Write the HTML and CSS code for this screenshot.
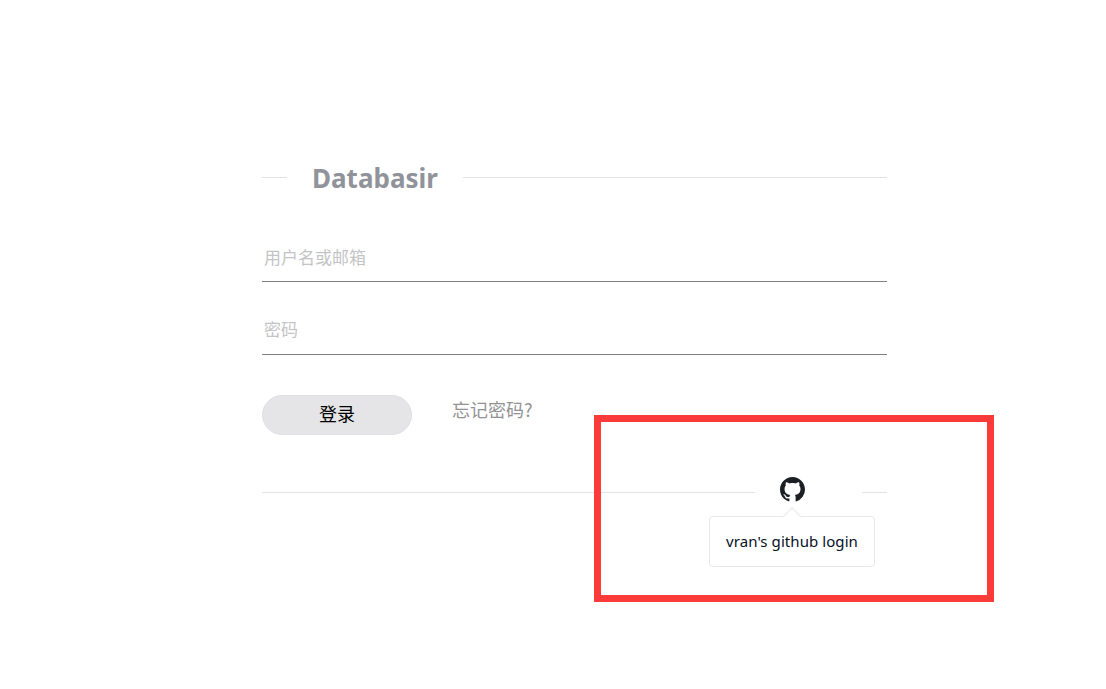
FILE: index.html
```html
<!DOCTYPE html>
<html lang="zh">
<head>
<meta charset="utf-8">
<title>Databasir</title>
<link rel="stylesheet" href="styles.css">
</head>
<body>
<main class="login">
  <div class="divider title-row">
    <span class="line line-start"></span>
    <h1 class="title">Databasir</h1>
    <span class="line"></span>
  </div>
  <form class="form">
    <input class="field" type="text" placeholder="用户名或邮箱">
    <input class="field field-second" type="password" placeholder="密码">
    <div class="actions">
      <button class="submit" type="button">登录</button>
      <a class="forgot" href="#">忘记密码?</a>
    </div>
  </form>
  <div class="divider oauth-row">
    <span class="line"></span>
    <span class="oauth">
      <svg class="github" viewBox="0 0 16 16" width="25" height="25" aria-hidden="true"><path fill="#1b1f23" d="M8 0C3.58 0 0 3.58 0 8c0 3.54 2.29 6.53 5.47 7.59.4.07.55-.17.55-.38 0-.19-.01-.82-.01-1.49-2.01.37-2.53-.49-2.69-.94-.09-.23-.48-.94-.82-1.13-.28-.15-.68-.52-.01-.53.63-.01 1.08.58 1.23.82.72 1.21 1.87.87 2.33.66.07-.52.28-.87.51-1.07-1.78-.2-3.64-.89-3.64-3.95 0-.87.31-1.59.82-2.15-.08-.2-.36-1.02.08-2.12 0 0 .67-.21 2.2.82.64-.18 1.32-.27 2-.27s1.36.09 2 .27c1.53-1.04 2.2-.82 2.2-.82.44 1.1.16 1.92.08 2.12.51.56.82 1.27.82 2.15 0 3.07-1.87 3.75-3.65 3.95.29.25.54.73.54 1.48 0 1.07-.01 1.93-.01 2.2 0 .21.15.46.55.38A8.01 8.01 0 0 0 16 8c0-4.42-3.58-8-8-8z"/></svg>
      <span class="tooltip">vran's github login</span>
    </span>
    <span class="line line-end"></span>
  </div>
</main>
<div class="highlight"></div>
</body>
</html>
```
FILE: styles.css
```css
* { box-sizing: border-box; }
html, body { margin: 0; height: 100%; background: #fff; }
body {
  font-family: "Noto Sans", "Noto Sans CJK SC", sans-serif;
  overflow: hidden;
}
.login {
  width: 625px;
  margin-left: 262px;
  padding-top: 157px;
}
.divider { display: flex; align-items: center; }
.line { flex: 1; height: 1px; background: #e2e2e6; }
.line-start { flex: 0 0 25px; }
.line-end { flex: 0 0 25px; }
.title-row { height: 40px; }
.title {
  margin: 0;
  padding: 2px 25px 0;
  font-size: 26px;
  line-height: 42px;
  font-weight: 700;
  color: #909399;
  white-space: nowrap;
}
.form { display: flex; flex-direction: column; padding-top: 25px; }
.field {
  width: 100%;
  height: 60px;
  padding: 9px 2px 0;
  border: 0;
  border-bottom: 1px solid #7f7f7f;
  outline: none;
  font: 17px "Noto Sans CJK SC", sans-serif;
}
.field::placeholder { color: #c4c4c6; opacity: 1; }
.field-second { margin-top: 13px; padding-top: 7px; }
.actions { display: flex; align-items: flex-start; gap: 40px; padding-top: 40px; }
.submit {
  width: 150px;
  height: 40px;
  border: 1px solid #e0e0e4;
  border-radius: 20px;
  background: #e5e5e7;
  color: #000;
  font: 18px/1 "Noto Sans CJK SC", sans-serif;
  padding: 0 0 5px;
}
.forgot {
  color: #929292;
  font: 18px/28px "Noto Sans CJK SC", sans-serif;
  text-decoration: none;
}
.oauth-row { margin-top: 42px; height: 30px; }
.oauth {
  position: relative;
  flex: 0 0 107px;
  align-self: flex-start;
  padding-left: 25px;
}
.github { display: block; }
.tooltip {
  position: absolute;
  top: 39px;
  left: -46px;
  width: 166px;
  height: 51px;
  border: 1px solid #e8e8ec;
  border-radius: 4px;
  background: #fff;
  color: #06101f;
  font-size: 15px;
  line-height: 49px;
  letter-spacing: 0.07px;
  text-align: center;
  white-space: nowrap;
}
.tooltip::before {
  content: "";
  position: absolute;
  top: -7px;
  left: 75px;
  width: 13px;
  height: 13px;
  background: #fff;
  border-top: 1px solid #e8e8ec;
  border-left: 1px solid #e8e8ec;
  transform: rotate(45deg);
}
.highlight {
  position: absolute;
  left: 594px;
  top: 415px;
  width: 400px;
  height: 187px;
  border: 7px solid #fb3a3a;
  pointer-events: none;
}
```
